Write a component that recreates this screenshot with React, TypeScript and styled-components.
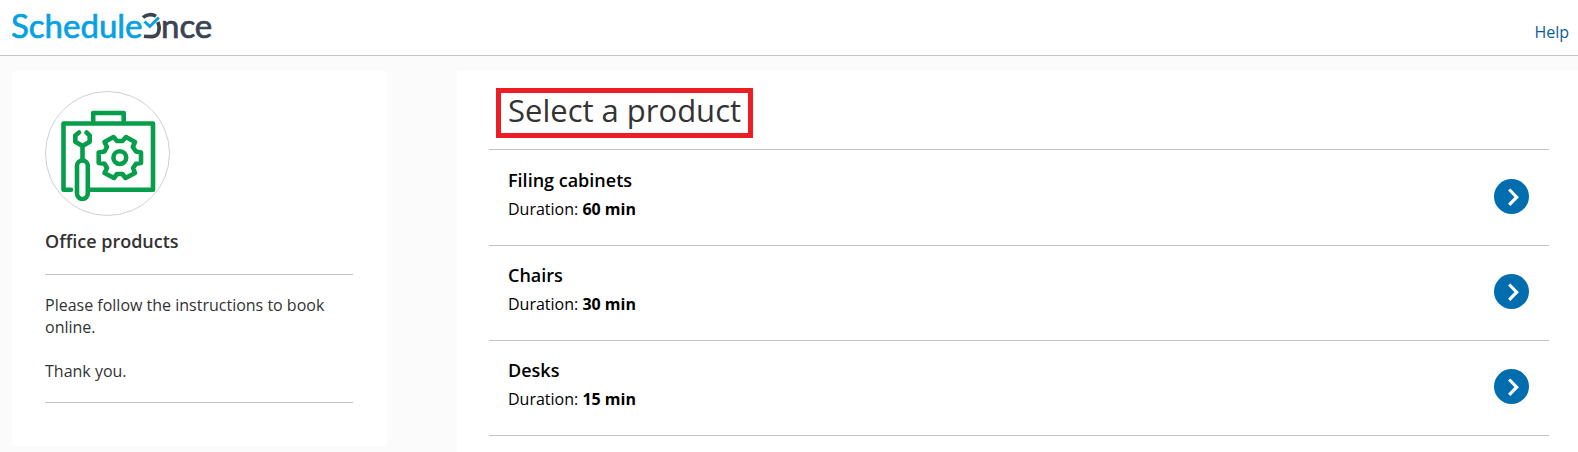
import React from "react";
import styled, { createGlobalStyle } from "styled-components";

const GlobalStyle = createGlobalStyle`
  *, *::before, *::after { box-sizing: border-box; }
  body {
    margin: 0;
    background: #fbfbfb;
    color: #333;
    font-family: "Open Sans", sans-serif;
    font-size: 16px;
    line-height: 22px;
  }
  h1, h2, h3, p, ul { margin: 0; padding: 0; }
`;

const Header = styled.header`
  display: flex;
  align-items: center;
  justify-content: space-between;
  padding: 6px 9px 5px 12px;
  background: #fff;
  border-bottom: 1px solid #c4c4c4;
`;

const HelpLink = styled.a`
  margin-top: 8px;
  color: #0a5ba4;
  text-decoration: none;
`;

const Main = styled.main`
  display: grid;
  grid-template-columns: 375px minmax(0, 1fr);
  column-gap: 70px;
  align-items: start;
  padding: 15px 0 0 12px;
`;

const Sidebar = styled.aside`
  padding: 20px 34px 43px 33px;
  background: #fff;
`;

const Avatar = styled.div`
  display: flex;
  width: 125px;
  height: 125px;
  border: 1px solid #d0d0d0;
  border-radius: 50%;
  overflow: hidden;
`;

const SidebarTitle = styled.h2`
  padding: 13px 0 21px;
  font-size: 18px;
  font-weight: 600;
  line-height: 24px;
`;

const Instructions = styled.div`
  display: grid;
  row-gap: 22px;
  padding: 19px 0 20px;
  border: solid #c4c4c4;
  border-width: 1px 0;
`;

const Panel = styled.section`
  padding: 17px 29px 16px 32px;
  background: #fff;
`;

const PanelHeader = styled.div`
  display: flex;
  padding: 0 0 11px 7px;
  border-bottom: 1px solid #c4c4c4;
`;

const PanelTitle = styled.h1`
  padding: 0 7px 6px 7px;
  border: 5px solid #ee1c24;
  font-size: 31px;
  font-weight: 400;
  line-height: 34px;
`;

const ProductList = styled.ul`
  padding-top: 1px;
  list-style: none;
`;

const ProductRow = styled.li`
  display: flex;
  align-items: flex-start;
  justify-content: space-between;
  padding: 17px 20px 25px 19px;
  border-bottom: 1px solid #c4c4c4;
  color: #000;
`;

const ProductName = styled.h3`
  padding-bottom: 6px;
  font-size: 18px;
  font-weight: 600;
  line-height: 24px;
`;

const Strong = styled.strong`
  font-weight: 700;
`;

const SelectButton = styled.button`
  display: flex;
  width: 35px;
  height: 35px;
  margin-top: 11px;
  padding: 0;
  border: 0;
  border-radius: 50%;
  background: #006dae;
  cursor: pointer;
`;

const products = [
  { name: "Filing cabinets", duration: "60 min" },
  { name: "Chairs", duration: "30 min" },
  { name: "Desks", duration: "15 min" },
];

const Logo = () => (
  <svg width="204" height="44" viewBox="12 6 204 44" role="img" aria-label="ScheduleOnce">
    <g fontFamily="Lato, sans-serif" fontSize="33" fontWeight="400" strokeWidth="0.700">
      <text x="11" y="38" fill="#06a0e3" stroke="#06a0e3">Schedule</text>
      <text x="161" y="38" fill="#3a4350" stroke="#3a4350">nce</text>
    </g>
    <g fill="none" strokeWidth="3.600">
      <path d="M143 17.500C146.500 14.200 152 13.800 156 16.200" stroke="#3a4350" />
      <path d="M157.800 22C160.500 28 159.500 36.600 152 36.600C149 36.600 146.500 36.600 144 36.200" stroke="#3a4350" />
      <path d="M144.500 21.500L149.800 26.500L158.800 17.500" stroke="#06a0e3" strokeWidth="3" />
    </g>
  </svg>
);

const ToolboxIcon = () => (
  <svg width="123" height="123" viewBox="46 92 123 123" fill="none" stroke="#069e4b" strokeWidth="4.600" strokeLinecap="round" strokeLinejoin="round" aria-hidden="true">
    <path d="M71 189.800H63.500V123.500H153V189.800H88" />
    <path d="M93.200 123V113H123.700V123" />
    <path d="M79 132.500L75.300 135.500V141.800L82.500 146L89.700 141.800V135.500L86.500 132.500M82.500 146V160" />
    <rect x="77" y="160.500" width="10.800" height="38.500" rx="5.400" />
    <circle cx="119.800" cy="157.600" r="6.400" />
    <path d="M98.700 152.500L104.500 151.500L107 147L104.500 142L113.500 137L117 141H122.500L126 137L135 142L132.800 147L136 151.500L141 152.500V163L136 163.800L133 168L135 173L125.500 178L122.500 174H117L114 178L104.500 173L107 168L104.500 163.800L98.700 163Z" />
  </svg>
);

const Chevron = () => (
  <svg width="35" height="35" viewBox="0 0 35 35" fill="none" stroke="#fff" strokeWidth="3.200" aria-hidden="true">
    <path d="M15.200 10.500L22.700 18.200L15.200 25.900" />
  </svg>
);

export default function App() {
  return (
    <>
      <GlobalStyle />
      <Header>
        <Logo />
        <HelpLink href="#help">Help</HelpLink>
      </Header>
      <Main>
        <Sidebar>
          <Avatar><ToolboxIcon /></Avatar>
          <SidebarTitle>Office products</SidebarTitle>
          <Instructions>
            <p>Please follow the instructions to book online.</p>
            <p>Thank you.</p>
          </Instructions>
        </Sidebar>
        <Panel>
          <PanelHeader>
            <PanelTitle>Select a product</PanelTitle>
          </PanelHeader>
          <ProductList>
            {products.map(({ name, duration }) => (
              <ProductRow key={name}>
                <div>
                  <ProductName>{name}</ProductName>
                  <p>Duration: <Strong>{duration}</Strong></p>
                </div>
                <SelectButton type="button" aria-label={`Select ${name}`}>
                  <Chevron />
                </SelectButton>
              </ProductRow>
            ))}
          </ProductList>
        </Panel>
      </Main>
    </>
  );
}
